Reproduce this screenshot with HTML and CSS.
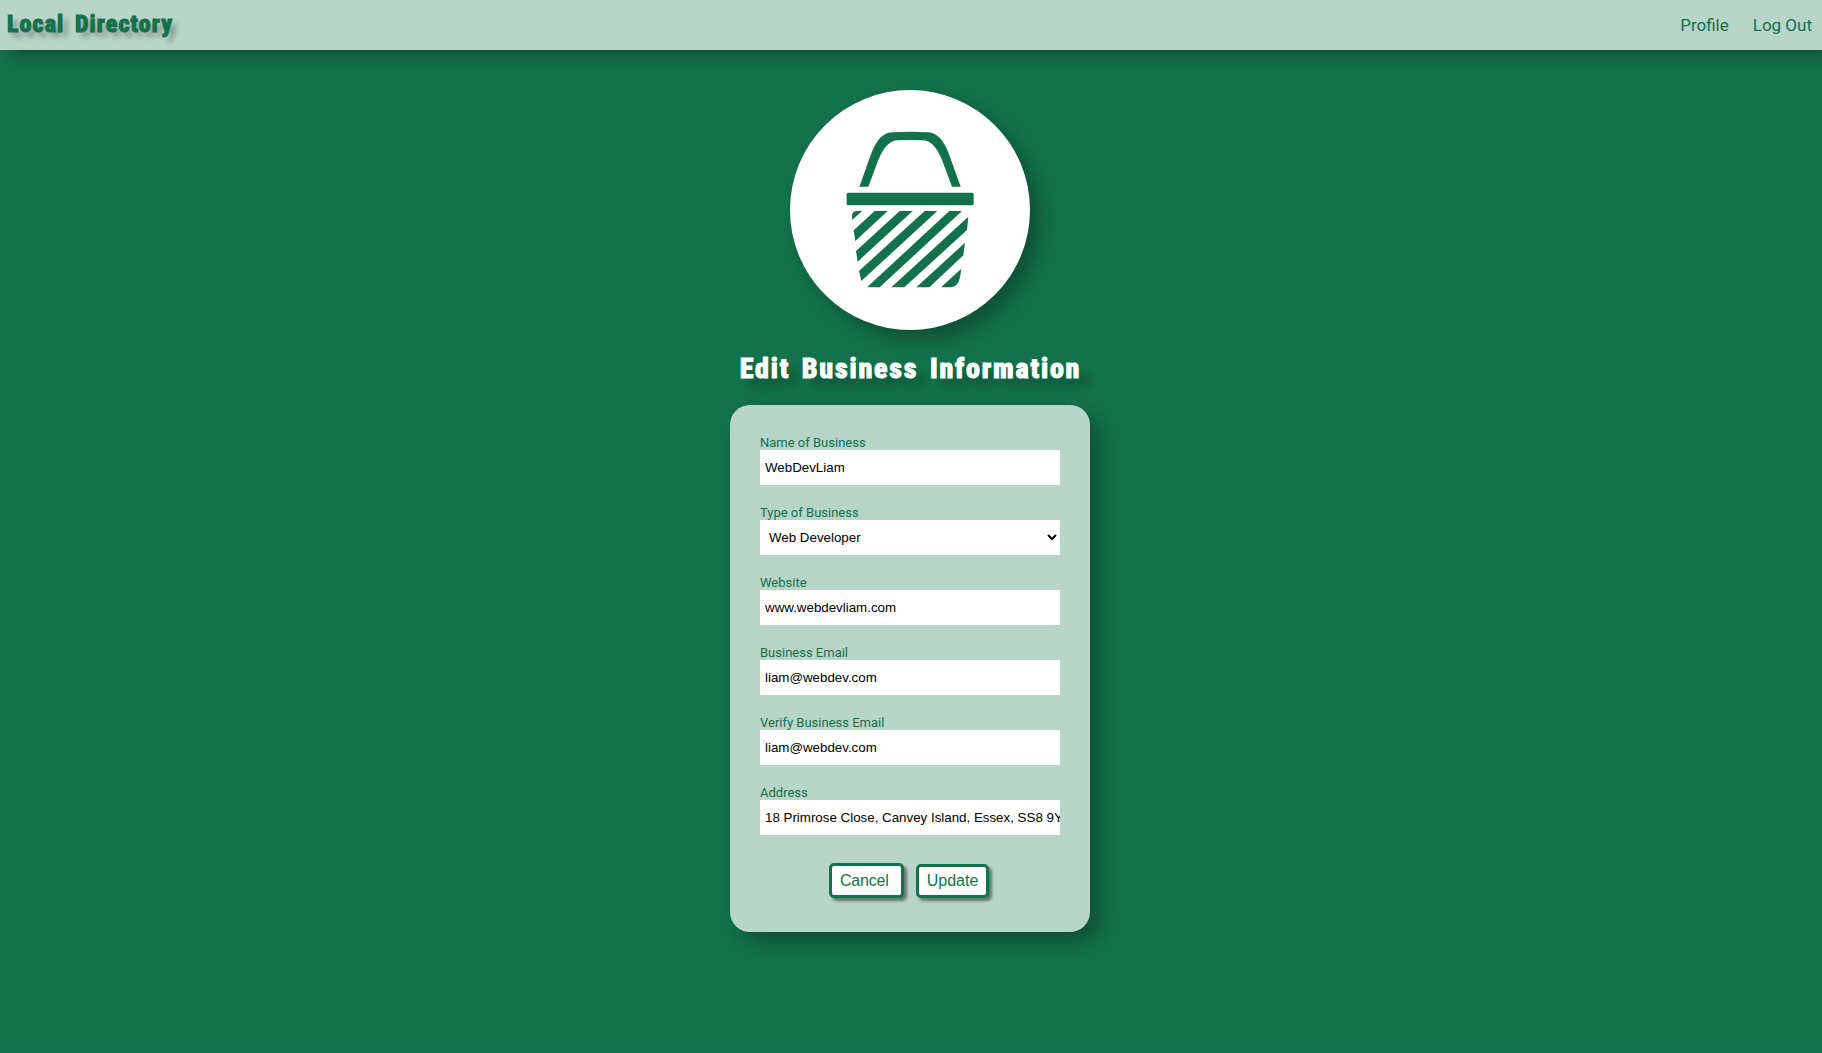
FILE: index.html
```html
<!DOCTYPE html>
<html lang="en">
<head>
<meta charset="utf-8">
<title>Local Directory</title>
<link rel="stylesheet" href="styles.css">
</head>
<body>
<header class="navbar">
  <a class="brand">Local Directory</a>
  <nav class="links"><a>Profile</a><a>Log Out</a></nav>
</header>
<main class="content">
  <div class="logo">
    <svg viewBox="30 30 720 720" width="240" height="240">
      <g fill="#13724b">
        <path d="M238 320L274 220Q298 157 338 157Q390 154 442 157Q482 157 506 220L542 320H516L486 240Q462 181 428 181Q390 179 354 181Q319 181 295 240L265 320Z"/>
        <rect x="200" y="338" width="381" height="38" rx="5"/>
        <path d="M216 420V405Q218 393 230 393H247Z"/>
        <path d="M284 393H323L226 483L221 451Z"/>
        <path d="M359 393H398L233 545L228 513Z"/>
        <path d="M434 393H472L244 603L237 573Z"/>
        <path d="M508 393H546L299 622H261Z"/>
        <path d="M565 410L561 450L373 622H334Z"/>
        <path d="M555 488L550 526L448 622H409Z"/>
        <path d="M544 566L540 592Q534 622 510 622H483Z"/>
      </g>
    </svg>
  </div>
  <h1 class="title">Edit Business Information</h1>
  <form class="card">
    <label class="field">Name of Business<input type="text" value="WebDevLiam"></label>
    <label class="field">Type of Business<select><option>Web Developer</option></select></label>
    <label class="field">Website<input type="text" value="www.webdevliam.com"></label>
    <label class="field">Business Email<input type="text" value="liam@webdev.com"></label>
    <label class="field">Verify Business Email<input type="text" value="liam@webdev.com"></label>
    <label class="field">Address<input type="text" value="18 Primrose Close, Canvey Island, Essex, SS8 9YZ"></label>
    <div class="actions">
      <a class="btn cancel">Cancel</a>
      <button class="btn update" type="button">Update</button>
    </div>
  </form>
</main>
</body>
</html>
```
FILE: styles.css
```css
* { box-sizing: border-box; }
body {
  margin: 0;
  height: 1053px;
  overflow: hidden;
  background: #13724b;
  border-bottom: 2px solid #106c49;
  color: #13724b;
  font-family: Roboto, sans-serif;
}
.navbar {
  height: 50px;
  padding: 0 10px 0 7px;
  display: flex;
  align-items: center;
  justify-content: space-between;
  background: #b8d5c9;
  box-shadow: 10px 5px 15px rgba(0, 0, 0, .35);
}
.brand, .title {
  font-weight: 800;
  font-stretch: 80%;
  -webkit-text-stroke: 1px currentColor;
  stroke-linejoin: round;
}
.brand {
  font-size: 24px;
  line-height: 46px;
  padding-bottom: 2px;
  letter-spacing: 1.1px;
  word-spacing: 4px;
  text-shadow: 5px 5px 5px rgba(0, 0, 0, .3);
}
.links { display: flex; gap: 24px; font-size: 17px; }
.content { display: flex; flex-direction: column; align-items: center; }
.logo {
  width: 240px;
  height: 240px;
  margin: 40px 2px 0 0;
  border-radius: 50%;
  background: #fff;
  box-shadow: 10px 10px 20px rgba(0, 0, 0, .3);
}
.logo svg { display: block; }
.title {
  margin: 20px 1px 15px 0;
  height: 40px;
  line-height: 37px;
  font-size: 28px;
  letter-spacing: 1.8px;
  white-space: nowrap;
  word-spacing: 3.3px;
  color: #fff;
  text-shadow: 10px 10px 10px rgba(0, 0, 0, .3);
}
.card {
  width: 360px;
  height: 527px;
  margin-right: 2px;
  padding: 30px 30px 0;
  border-radius: 20px;
  background: #b8d5c9;
  box-shadow: 10px 10px 20px rgba(0, 0, 0, .3);
}
.field { display: block; height: 70px; font-size: 13px; line-height: 15px; }
.field input, .field select {
  display: block;
  width: 300px;
  height: 35px;
  padding: 0 0 0 5px;
  border: 0;
  border-radius: 0;
  background: #fff;
  color: #000;
  font: 13.333px "Liberation Sans", sans-serif;
}
.actions { display: flex; align-items: flex-end; padding: 8px 0 0 69px; gap: 12px; }
.btn {
  border: 3px solid #13724b;
  border-radius: 5px;
  background: #fff;
  color: #13724b;
  font-size: 16px;
  box-shadow: 3px 3px 3px rgba(0, 0, 0, .45);
}
.cancel { width: 75px; height: 35px; padding-left: 8px; line-height: 29px; letter-spacing: -.2px; font-family: "Liberation Sans", sans-serif; }
.update { width: 73px; height: 34px; padding: 0; font-family: "Liberation Sans", sans-serif; }
```
